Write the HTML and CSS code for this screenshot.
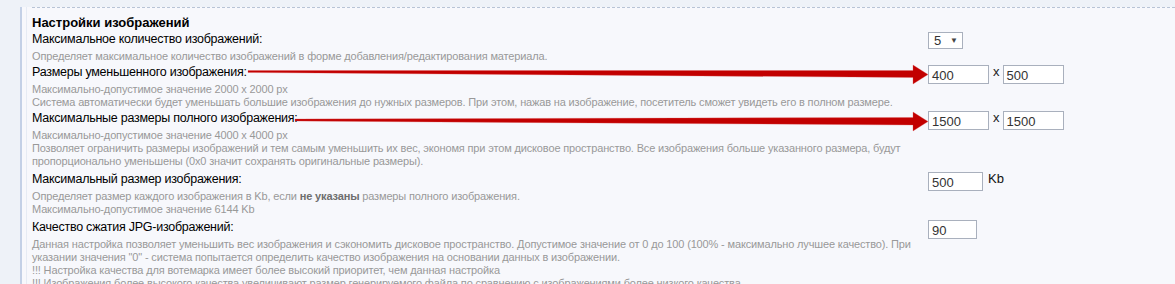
FILE: index.html
```html
<!DOCTYPE html>
<html lang="ru">
<head>
<meta charset="utf-8">
<title>Настройки изображений</title>
<link rel="stylesheet" href="styles.css">
</head>
<body>
<div class="page">
  <div class="panel">
    <div class="content">
      <h3 class="heading">Настройки изображений</h3>

      <div class="setting">
        <div class="info">
          <div class="label">Максимальное количество изображений:</div>
          <div class="desc">Определяет максимальное количество изображений в форме добавления/редактирования материала.</div>
        </div>
        <div class="controls">
          <div class="select"><span>5</span><span class="caret">&#9660;</span></div>
        </div>
      </div>

      <div class="setting">
        <div class="info">
          <div class="label">Размеры уменьшенного изображения:</div>
          <div class="desc">Максимально-допустимое значение 2000 x 2000 px<br>Система автоматически будет уменьшать большие изображения до нужных размеров. При этом, нажав на изображение, посетитель сможет увидеть его в полном размере.</div>
        </div>
        <div class="controls">
          <div class="input w60">400</div><span class="sep">x</span><div class="input w60">500</div>
        </div>
      </div>

      <div class="setting">
        <div class="info">
          <div class="label">Максимальные размеры полного изображения:</div>
          <div class="desc">Максимально-допустимое значение 4000 x 4000 px<br>Позволяет ограничить размеры изображений и тем самым уменьшить их вес, экономя при этом дисковое пространство. Все изображения больше указанного размера, будут<br>пропорционально уменьшены (0x0 значит сохранять оригинальные размеры).</div>
        </div>
        <div class="controls">
          <div class="input w60">1500</div><span class="sep">x</span><div class="input w60">1500</div>
        </div>
      </div>

      <div class="setting gap3">
        <div class="info">
          <div class="label">Максимальный размер изображения:</div>
          <div class="desc">Определяет размер каждого изображения в Kb, если <b>не указаны</b> размеры полного изображения.<br>Максимально-допустимое значение 6144 Kb</div>
        </div>
        <div class="controls">
          <div class="input w54">500</div><span class="unit">Kb</span>
        </div>
      </div>

      <div class="setting gap3">
        <div class="info">
          <div class="label">Качество сжатия JPG-изображений:</div>
          <div class="desc">Данная настройка позволяет уменьшить вес изображения и сэкономить дисковое пространство. Допустимое значение от 0 до 100 (100% - максимально лучшее качество). При<br>указании значения "0" - система попытается определить качество изображения на основании данных в изображении.<br>!!! Настройка качества для вотемарка имеет более высокий приоритет, чем данная настройка<br>!!! Изображения более высокого качества увеличивают размер генерируемого файла по сравнению с изображениями более низкого качества</div>
        </div>
        <div class="controls">
          <div class="input w48">90</div>
        </div>
      </div>
    </div>
  </div>

  <svg class="arrows" width="1175" height="284" viewBox="0 0 1175 284" aria-hidden="true">
    <polygon class="arrow" points="248,70.5 913,70.5 913,65 928,74.5 913,84 913,77.5 248,72.5"/>
    <polygon class="arrow" points="295,119 913,117.5 913,112 928,121.5 913,131 913,125 295,121"/>
  </svg>
</div>
</body>
</html>
```

FILE: styles.css
```css
html, body {
  margin: 0;
  padding: 0;
}
body {
  background: #eef2f8;
  font-family: "Liberation Sans", Arial, sans-serif;
  color: #000;
}
.page {
  position: relative;
  width: 1175px;
  height: 284px;
  overflow: hidden;
  padding-left: 20px;
  box-sizing: border-box;
}
.panel {
  border-left: 2px solid #c3d0e6;
  background: #f7f8fc;
  height: 100%;
  padding-left: 4px;
}
.content {
  border-left: 1px solid #e6ebf4;
  padding-left: 5px;
  height: 100%;
}
.heading {
  margin: 7px 0 0 0;
  padding: 6px 0 0 0;
  border-top: 1px dashed #b8c4d6;
  font-size: 13px;
  line-height: 17px;
  font-weight: bold;
}
.setting {
  display: grid;
  grid-template-columns: 896px 1fr;
  padding-bottom: 1px;
}
.setting.gap3 {
  padding-top: 2px;
}
.label {
  font-size: 12.5px;
  letter-spacing: -0.25px;
  line-height: 17px;
  color: #000;
  white-space: nowrap;
}
.desc {
  margin-top: 2px;
  font-size: 11px;
  letter-spacing: -0.15px;
  line-height: 13px;
  color: #999;
  white-space: nowrap;
}
.desc b {
  color: #6e6e6e;
}
.controls {
  display: flex;
  align-items: flex-start;
}
.select {
  height: 15px;
  border: 1px solid #a9b0bd;
  background: #fff;
  display: flex;
  align-items: center;
  justify-content: space-between;
  padding: 0 4px 0 5px;
  box-sizing: content-box;
  font-size: 13px;
  color: #333;
  width: 24px;
  margin-top: 1px;
}
.caret {
  font-size: 8px;
  color: #444;
}
.input {
  height: 17px;
  border: 1px solid #a9b0bd;
  background: #fff;
  font-size: 13px;
  line-height: 19px;
  color: #333;
  padding-left: 3px;
  box-sizing: content-box;
  margin-top: 1px;
}
.w60 { width: 56px; }
.w54 { width: 50px; }
.w48 { width: 44px; }
.sep {
  font-size: 13px;
  color: #222;
  padding: 0 3px 0 4px;
  line-height: 16px;
}
.unit {
  font-size: 13px;
  color: #111;
  padding-left: 5px;
  line-height: 16px;
}
.arrows {
  position: absolute;
  left: 0;
  top: 0;
  pointer-events: none;
}
.arrow {
  fill: #c20000;
  stroke: #d55;
  stroke-width: 0.6;
  stroke-opacity: 0.5;
}
```
